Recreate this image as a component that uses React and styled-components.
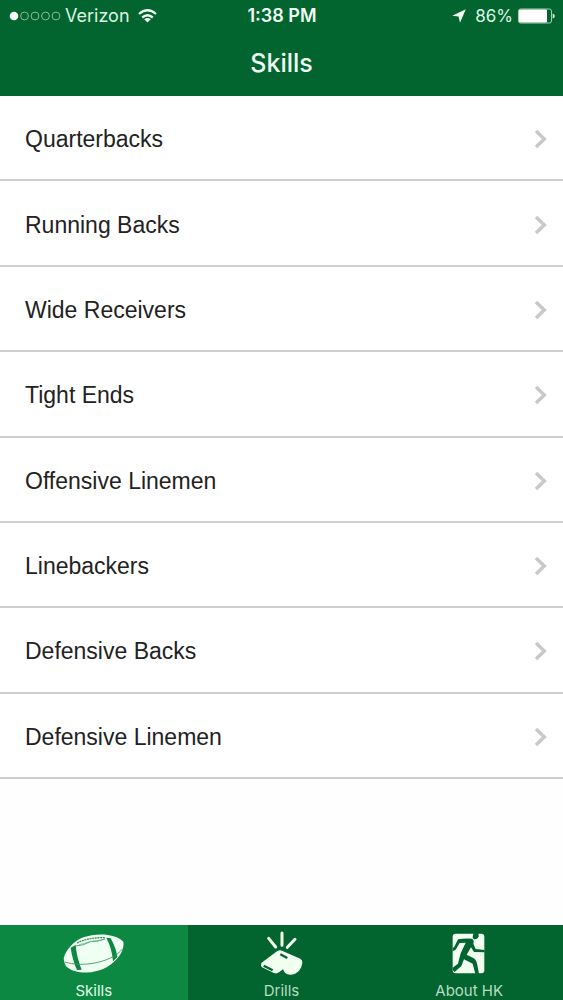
import React, { useState } from "react";
import styled, { createGlobalStyle } from "styled-components";

const GREEN = "#02642f";
const ACTIVE = "#0d8842";

const GlobalStyle = createGlobalStyle`
  * { box-sizing: border-box; }
  body { margin: 0; background: #fefefe; font-family: Inter, "Liberation Sans", sans-serif; }
`;

const Screen = styled.div`
  display: flex;
  flex-direction: column;
  min-height: 100vh;
`;

const Header = styled.header`
  background: ${GREEN};
  color: #f0fff2;
  height: 96px;
`;

const StatusBar = styled.div`
  display: grid;
  grid-template-columns: 1fr auto 1fr;
  align-items: center;
  height: 32px;
  padding: 0 8px 0 9px;
  font-size: 18px;
  line-height: 24px;
`;

const StatusGroup = styled.div`
  display: flex;
  align-items: center;
  justify-content: ${(p) => (p.$end ? "flex-end" : "flex-start")};
  gap: ${(p) => (p.$end ? "5px" : "4px")};
`;

const Carrier = styled.span`
  margin-right: 4px;
  color: #dcf5e2;
`;

const Percent = styled.span`
  margin-left: 4px;
  color: #dcf5e2;
  font-size: 17px;
`;

const Clock = styled.time`
  font-weight: 600;
`;

const Title = styled.h1`
  margin: 0;
  padding-top: 14px;
  font-size: 25px;
  line-height: 34px;
  font-weight: 500;
  text-align: center;
`;

const List = styled.nav`
  display: grid;
  grid-auto-rows: 1fr;
  min-height: 683px;
  background: #fff;
`;

const Row = styled.a`
  display: flex;
  align-items: center;
  justify-content: space-between;
  padding: 3px 16px 0 25px;
  border-bottom: 2px solid #cecece;
  color: #222;
  font-family: "Liberation Sans", Arial, sans-serif;
  font-size: 23px;
  font-weight: 300;
  line-height: 32px;
  text-decoration: none;
`;

const TabBar = styled.nav`
  display: grid;
  grid-template-columns: repeat(3, 1fr);
  height: 75px;
  margin-top: auto;
  background: ${GREEN};
`;

const Tab = styled.button`
  display: flex;
  flex-direction: column;
  align-items: center;
  justify-content: space-between;
  padding: 6px 0 0;
  border: 0;
  background: ${(p) => (p.$active ? ACTIVE : GREEN)};
  color: ${(p) => (p.$active ? "#e2ffe6" : "#b9dcc2")};
  font: 400 15px/18px Inter, "Liberation Sans", sans-serif;
  cursor: pointer;
`;

const IconBox = styled.span`
  display: flex;
  align-items: center;
  height: 45px;
`;

function SignalDots() {
  return (
    <svg width="52" height="12" viewBox="0 0 52 12" aria-label="Signal strength">
      <circle cx="5" cy="6" r="4.3" fill="#fff" />
      {[15.5, 26, 36.5, 47].map((x) => (
        <circle key={x} cx={x} cy="6" r="3.9" fill="none" stroke="#86bd94" strokeWidth="1" />
      ))}
    </svg>
  );
}

function Wifi() {
  return (
    <svg width="19" height="14" viewBox="0 0 19 14" fill="none" stroke="#f0fff2" strokeWidth="2.3" aria-label="Wi-Fi">
      <path d="M1 5Q9.500-2.400 18 5M4.200 8.500Q9.500 4 14.800 8.500" />
      <path d="M9.500 13.600 6.200 10.300Q9.500 7.800 12.800 10.300Z" fill="#f0fff2" stroke="none" />
    </svg>
  );
}

function Location() {
  return (
    <svg width="14" height="14" viewBox="0 0 14 14" fill="#f0fff2" aria-label="Location in use">
      <path d="M13.800.2.2 6.700 6.500 7.500 8 13.800Z" />
    </svg>
  );
}

function Battery() {
  return (
    <svg width="37" height="16" viewBox="0 0 37 16" aria-label="Battery">
      <rect x=".5" y="1" width="33" height="14" rx="2" fill="none" stroke="#a6d0b0" />
      <rect x="1" y="1.500" width="28" height="13" rx="1" fill="#fff" />
      <path d="M34.700 5.500Q36.800 6 36.800 8T34.700 10.500Z" fill="#d9f5df" />
    </svg>
  );
}

function Chevron() {
  return (
    <svg width="13" height="20" viewBox="0 0 13 20" fill="none" stroke="#c8c8ca" strokeWidth="3.400" aria-hidden="true">
      <path d="M2 2 10.300 10 2 18" />
    </svg>
  );
}

function Football() {
  return (
    <svg width="62" height="41" viewBox="40 38 186 123" aria-hidden="true">
      <path d="M42 113C50 87 73 62 101 51C138 39 192 37 221 64C226 91 202 124 171 141C136 161 77 164 49 138Q42 127 42 113Z" fill="#effff1" />
      <path d="M63 82 78 74Q81 112 96 148L82 149Q68 118 63 82Z" fill={ACTIVE} />
      <path d="M170 52 183 54Q199 82 203 110L190 123Q187 84 170 52Z" fill={ACTIVE} />
      <path d="M45 125Q84 137 130 129C170 122 202 107 218 86" fill="none" stroke="#398f61" strokeWidth="2.500" />
      <path d="M78 77Q101 76 122 64Q143 65 166 56" fill="none" stroke="#52a177" strokeWidth="3" />
      <path d="M82 68Q119 50 166 52" fill="none" stroke="#398f61" strokeWidth="4" strokeDasharray="6 2" />
      <path d="M88 73Q123 61 160 58" fill="none" stroke="#75b891" strokeWidth="2" />
    </svg>
  );
}

function Whistle() {
  return (
    <svg width="43" height="45" viewBox="60 30 129 135" aria-hidden="true">
      <g fill="none" stroke="#f0fff0" strokeWidth="9" strokeLinecap="round">
        <path d="M86 52 107 78M126 36V73M165 55 142 79" />
      </g>
      <path d="M64 126 111 91Q118 86 126 89L181 113Q188 117 187 126Q183 150 164 159Q149 164 139 158Q131 153 129 145L117 154Q110 159 102 156L66 139Q61 135 64 126Z" fill="#f0fff0" />
      <path d="M121 100 142 111M71 134 98 148" fill="none" stroke={GREEN} strokeWidth="7" />
    </svg>
  );
}

function Runner() {
  return (
    <svg width="34" height="41" viewBox="81 38 102 123" aria-hidden="true">
      <rect x="83" y="40" width="95" height="119" rx="9" fill="#f0fff0" />
      <g fill={GREEN}>
        <path d="M144 43Q146 36 160 38L161 48Q158 58 148 57L143 54Z" />
        <path d="M99 57Q122 53 140 55Q149 59 145 70L152 86 179 89V96L147 95 138 81 125 103 145 113Q154 118 157 134L162 160H151L143 130 117 117 109 137 89 155 83 150V142L99 130 107 99 122 67 104 68 92 88 83 93V84L88 79Z" />
      </g>
    </svg>
  );
}

const skills = [
  "Quarterbacks",
  "Running Backs",
  "Wide Receivers",
  "Tight Ends",
  "Offensive Linemen",
  "Linebackers",
  "Defensive Backs",
  "Defensive Linemen",
];

const tabs = [
  { label: "Skills", Icon: Football },
  { label: "Drills", Icon: Whistle },
  { label: "About HK", Icon: Runner },
];

export default function App() {
  const [active, setActive] = useState("Skills");
  return (
    <Screen>
      <GlobalStyle />
      <Header>
        <StatusBar>
          <StatusGroup>
            <SignalDots />
            <Carrier>Verizon</Carrier>
            <Wifi />
          </StatusGroup>
          <Clock>1:38 PM</Clock>
          <StatusGroup $end>
            <Location />
            <Percent>86%</Percent>
            <Battery />
          </StatusGroup>
        </StatusBar>
        <Title>Skills</Title>
      </Header>
      <List aria-label="Skills">
        {skills.map((name) => (
          <Row key={name} href="#">
            {name}
            <Chevron />
          </Row>
        ))}
      </List>
      <TabBar aria-label="Sections">
        {tabs.map(({ label, Icon }) => (
          <Tab key={label} type="button" $active={active === label} onClick={() => setActive(label)}>
            <IconBox>
              <Icon />
            </IconBox>
            {label}
          </Tab>
        ))}
      </TabBar>
    </Screen>
  );
}
